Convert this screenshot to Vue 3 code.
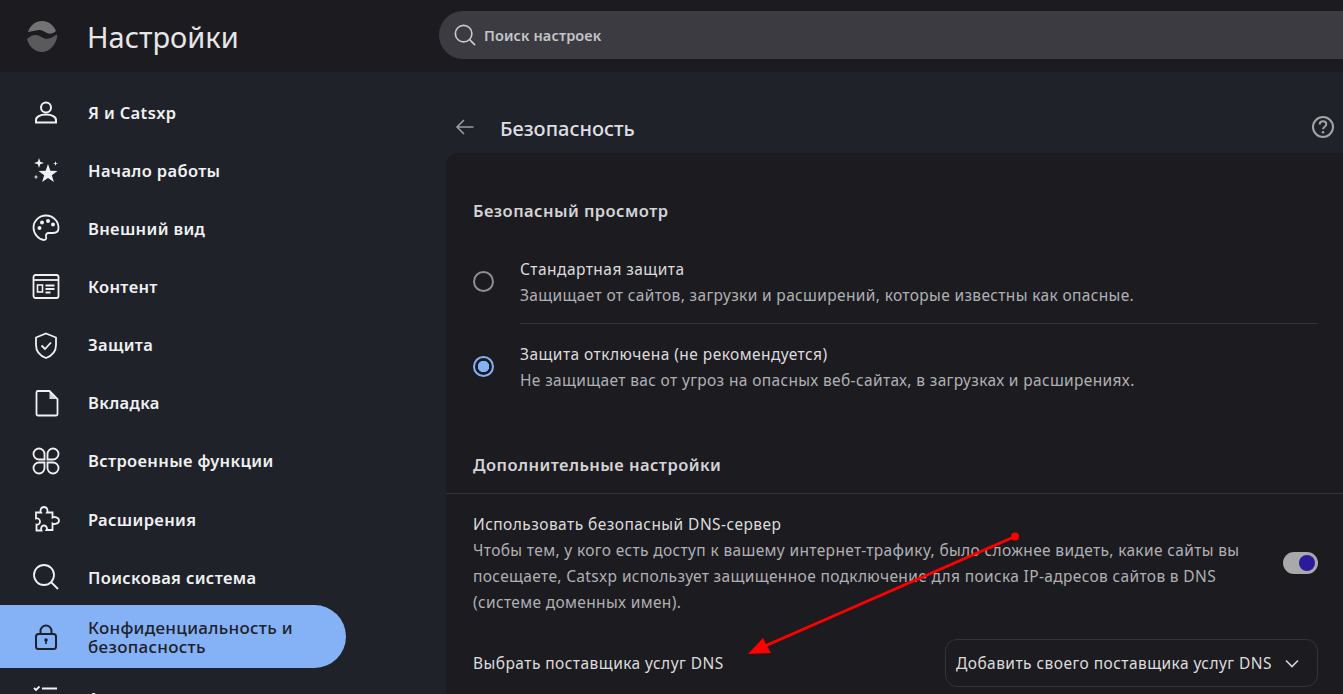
<script setup>
const navItems = [
  { label: "Я и Catsxp", icon: "person" },
  { label: "Начало работы", icon: "stars" },
  { label: "Внешний вид", icon: "palette" },
  { label: "Контент", icon: "content" },
  { label: "Защита", icon: "shield" },
  { label: "Вкладка", icon: "page" },
  { label: "Встроенные функции", icon: "clover" },
  { label: "Расширения", icon: "puzzle" },
  { label: "Поисковая система", icon: "search" },
  { label: "Конфиденциальность и безопасность", icon: "lock", active: true },
  { label: "Автозаполнение", icon: "list" },
];
</script>

<template>
  <div class="page">
    <header class="topbar">
      <div class="brand">
        <svg class="logo" width="32" height="32" viewBox="0 0 32 32">
          <path d="M2 12C4 5.500 9.500 1 16 1c6.500 0 11.500 4 14 10-3 2.500-6 3.500-9 2-3-1.500-5.500-3.500-8.500-3-3.500.500-7 1.500-10.500 2z" fill="#737375" />
          <path d="M1 19c3.500-3 6.500-4.500 9.500-4 3 .500 5 2.500 8 3.500 3.500 1 7-.500 12.500-4 .500 1.500 0 3-.500 5C28 26.500 22.500 32 16 32 8.500 32 3 26.500 1 19z" fill="#5a5a5d" />
        </svg>
        <span class="brand-title">Настройки</span>
      </div>
      <div class="search">
        <svg width="22" height="22" viewBox="0 0 24 24" fill="none" stroke="#c9c9cb" stroke-width="1.800">
          <circle cx="10.500" cy="10.500" r="9" />
          <path d="M17 17l6 6" />
        </svg>
        <span>Поиск настроек</span>
      </div>
    </header>

    <div class="body">
      <nav class="sidebar">
        <a v-for="item in navItems" :key="item.label" class="nav-item" :class="{ active: item.active }">
          <svg class="nav-icon" width="28" height="28" viewBox="0 0 28 28" fill="none" stroke="currentColor" stroke-width="1.800">
            <template v-if="item.icon === 'person'">
              <circle cx="14" cy="9.500" r="5" stroke-width="2" />
              <path d="M4 24.500v-2.500c0-3 4-5.500 10-5.500s10 2.500 10 5.500v2.500z" stroke-width="2" />
            </template>
            <template v-else-if="item.icon === 'stars'">
              <path d="M16 8l2.350 6.760 7.150.14-5.700 4.300 2.100 6.900-5.900-4.100-5.900 4.100 2.100-6.900-5.700-4.300 7.150-.14z" fill="currentColor" stroke="none" />
              <path d="M7 2l1.200 3.800L12 7 8.200 8.200 7 12 5.800 8.200 2 7l3.800-1.200zM23.500 5l.6 1.900 1.900.6-1.900.6-.6 1.900-.6-1.900-1.900-.6 1.900-.6zM4 18.500l.6 1.900 1.900.6-1.900.6-.6 1.900-.6-1.900-1.900-.6 1.900-.6z" fill="currentColor" stroke="none" />
            </template>
            <template v-else-if="item.icon === 'palette'">
              <path d="M14 1.500C7 1.500 1.500 7 1.500 13.500S7 26 12 26c2.500 0 2.500-2 2-3.500-.500-1.700.500-3.500 3-3.500h4c3.500 0 5.500-2 5.500-5C26.500 7 21 1.500 14 1.500z" />
              <g fill="currentColor" stroke="none">
                <circle cx="7.500" cy="14" r="2" /><circle cx="10" cy="8.500" r="2" /><circle cx="16" cy="7" r="2" /><circle cx="21" cy="10.500" r="2" />
              </g>
            </template>
            <template v-else-if="item.icon === 'content'">
              <rect x="1.500" y="3" width="25" height="23" rx="2" />
              <path d="M1.500 8h25" />
              <rect x="5.500" y="13" width="5" height="7" stroke-width="1.600" />
              <path d="M13.500 13.500h9M13.500 17h9M13.500 20.500h5" />
            </template>
            <template v-else-if="item.icon === 'shield'">
              <path d="M14 2.500l10 4v7.500c0 6.500-4.500 11-10 13-5.500-2-10-6.500-10-13V6.500z" />
              <path d="M9.500 14.500l3.500 3.500 6-6.500" />
            </template>
            <template v-else-if="item.icon === 'page'">
              <path d="M6 2h11.500L25.500 10v15a1.500 1.500 0 0 1-1.500 1.500H6A1.500 1.500 0 0 1 4.500 25V3.500A1.500 1.500 0 0 1 6 2z" />
              <path d="M17.500 2.500v7.500h8z" fill="currentColor" stroke="none" opacity=".85" />
            </template>
            <template v-else-if="item.icon === 'clover'">
              <path d="M12.500 12.500H7a5.500 5.500 0 1 1 5.500-5.500zM15.500 12.500V7a5.500 5.500 0 1 1 5.500 5.500zM12.500 15.500V21A5.500 5.500 0 1 1 7 15.500zM15.500 15.500H21a5.500 5.500 0 1 1-5.500 5.500z" />
            </template>
            <template v-else-if="item.icon === 'puzzle'">
              <path d="M4 7.500h5c-1-1.500-.500-5.500 3-5.500s4 4 3 5.500h5.500v5c1.500-1 6.500-.500 6.500 3s-5 4-6.500 3v6.500h-6c1-1.500 0-4.500-2.500-4.500S8.500 23 9.500 25.500H4.500v-6c1.500.500 3.500-.500 3.500-3s-2-3.500-4-3z" />
            </template>
            <template v-else-if="item.icon === 'search'">
              <circle cx="12" cy="12" r="10" />
              <path d="M19 19l7 7" />
            </template>
            <template v-else-if="item.icon === 'lock'">
              <rect x="4" y="11" width="20" height="15" rx="2.500" stroke-width="2" />
              <path d="M8.500 11V8a5.500 5.500 0 0 1 11 0v3" stroke-width="2" />
              <circle cx="14" cy="17" r="1.800" fill="currentColor" stroke="none" />
              <path d="M14 17v4" stroke-width="1.600" />
            </template>
            <template v-else>
              <path d="M2 4l2 2 3.500-3.500M10 4.500h15M2 13l2 2 3.500-3.500M10 13.500h15" />
            </template>
          </svg>
          <span class="nav-label">{{ item.label }}</span>
        </a>
      </nav>

      <main class="content">
        <div class="page-head">
          <svg class="back" width="20" height="20" viewBox="0 0 20 20" fill="none" stroke="#9b9ca1" stroke-width="1.600">
            <path d="M18.500 10H2M9 3l-7 7 7 7" />
          </svg>
          <h1>Безопасность</h1>
          <svg class="help" width="24" height="24" viewBox="0 0 24 24" fill="none" stroke="#a3a4a8" stroke-width="2">
            <circle cx="12" cy="12" r="10" />
            <path d="M8.700 9.500c0-2 1.500-3.200 3.300-3.200s3.300 1.200 3.300 3c0 2.400-3.300 2.500-3.300 5" />
            <circle cx="12" cy="17.300" r="1.300" fill="#a3a4a8" stroke="none" />
          </svg>
        </div>

        <section class="card">
          <h2 class="section-title first">Безопасный просмотр</h2>

          <div class="radio-list">
            <div class="radio-row">
              <span class="radio"></span>
              <div class="radio-text">
                <div class="row-title">Стандартная защита</div>
                <div class="row-desc">Защищает от сайтов, загрузки и расширений, которые известны как опасные.</div>
              </div>
            </div>
            <div class="radio-row checked">
              <span class="radio"></span>
              <div class="radio-text">
                <div class="row-title">Защита отключена (не рекомендуется)</div>
                <div class="row-desc">Не защищает вас от угроз на опасных веб-сайтах, в загрузках и расширениях.</div>
              </div>
            </div>
          </div>

          <h2 class="section-title second">Дополнительные настройки</h2>

          <div class="dns-row">
            <div class="dns-text">
              <div class="row-title">Использовать безопасный DNS-сервер</div>
              <div class="row-desc">Чтобы тем, у кого есть доступ к вашему интернет-трафику, было сложнее видеть, какие сайты вы посещаете, Catsxp использует защищенное подключение для поиска IP-адресов сайтов в DNS (системе доменных имен).</div>
            </div>
            <span class="toggle"><span class="knob"></span></span>
          </div>

          <div class="provider-row">
            <span class="row-title">Выбрать поставщика услуг DNS</span>
            <div class="select">
              <span>Добавить своего поставщика услуг DNS</span>
              <svg width="14" height="9" viewBox="0 0 14 9" fill="none" stroke="#d6d6d8" stroke-width="1.600">
                <path d="M1 1.500l6 6 6-6" />
              </svg>
            </div>
          </div>
        </section>
      </main>
    </div>

    <svg class="annotation" width="1343" height="694" viewBox="0 0 1343 694">
      <circle cx="1015" cy="536.500" r="4" fill="#f00" />
      <path d="M1015 536.500L765 646" stroke="#f00" stroke-width="3" />
      <path d="M748 654L763 638 767 646 771 653z" fill="#f00" />
    </svg>
  </div>
</template>

<style scoped>
.page {
  position: relative;
  width: 1343px;
  height: 694px;
  overflow: hidden;
  display: flex;
  flex-direction: column;
  background: #1f2229;
  color: #e3e3e5;
  font-family: "Noto Sans", "Open Sans", sans-serif;
}

.topbar {
  height: 72px;
  flex: none;
  display: flex;
  align-items: center;
  background: #1c1b20;
}

.brand {
  width: 439px;
  flex: none;
  display: flex;
  align-items: center;
  padding-left: 26px;
  box-sizing: border-box;
}

.logo {
  margin-right: 29px;
}

.brand-title {
  font-size: 29px;
  color: #e6e6e8;
}

.search {
  width: 904px;
  height: 48px;
  margin-top: -2px;
  padding-left: 15px;
  box-sizing: border-box;
  display: flex;
  align-items: center;
  gap: 8px;
  border-radius: 24px 0 0 24px;
  background: #3c3b41;
  font-size: 14.500px;
  letter-spacing: 0.1px;
  font-weight: 600;
  color: #c5c5c8;
}

.body {
  flex: 1;
  min-height: 0;
  display: flex;
}

.sidebar {
  width: 446px;
  flex: none;
  padding-top: 11px;
  box-sizing: border-box;
}

.nav-item {
  width: 346px;
  min-height: 58.150px;
  padding-left: 32px;
  box-sizing: border-box;
  display: flex;
  align-items: center;
  gap: 28px;
  color: #f1f1f3;
  font-size: 16.500px;
  letter-spacing: 0.35px;
  font-weight: 600;
}

.nav-icon {
  flex: none;
}

.nav-item.active {
  min-height: 63px;
  margin-top: -1px;
  margin-bottom: 1px;
  border-radius: 0 32px 32px 0;
  background: #85b1f6;
  color: #1e2129;
  font-size: 17px;
  letter-spacing: 0.3px;
  font-weight: 500;
  line-height: 19px;
}

.nav-label {
  width: 226px;
}

.content {
  flex: 1;
  min-width: 0;
}

.page-head {
  height: 81px;
  padding: 32px 8px 0 9px;
  box-sizing: border-box;
  display: flex;
  align-items: center;
}

.back {
  margin-right: 25px;
  margin-top: -3px;
}

.page-head h1 {
  flex: 1;
  margin: 0;
  font-size: 20px;
  font-weight: 500;
  color: #dedee0;
}

.help {
  margin-top: -3px;
}

.card {
  height: 541px;
  overflow: hidden;
  border-radius: 12px 0 0 0;
  background: #1c1b20;
}

.section-title {
  margin: 0;
  padding: 0 27px;
  font-size: 16.500px;
  letter-spacing: 0.45px;
  font-weight: 600;
  line-height: 22px;
  color: #d4d4d6;
}

.section-title.first {
  padding-top: 47px;
}

.section-title.second {
  margin-top: 46px;
  padding-bottom: 17px;
  border-bottom: 1px solid #34343a;
}

.radio-list {
  margin-top: 17px;
}

.radio-row {
  display: flex;
  align-items: center;
  gap: 26px;
  padding-left: 27px;
}

.radio {
  width: 21px;
  height: 21px;
  flex: none;
  box-sizing: border-box;
  border: 2px solid #8f8f93;
  border-radius: 50%;
}

.radio-row.checked .radio {
  border-color: #85b1f6;
  background: radial-gradient(circle, #85b1f6 0 5.500px, transparent 6px);
}

.radio-text {
  flex: 1;
  min-width: 0;
  margin-right: 25px;
  padding: 17px 0 15px;
}

.radio-row:not(.checked) .radio-text {
  border-bottom: 1px solid #34343a;
}

.row-title {
  font-size: 15.500px;
  letter-spacing: 0.45px;
  line-height: 26px;
  color: #dcdcde;
}

.row-desc {
  font-size: 15.500px;
  letter-spacing: 0.35px;
  line-height: 26px;
  color: #b0b0b3;
}

.dns-row {
  display: flex;
  align-items: center;
  padding: 17px 25px 0 27px;
}

.dns-text {
  width: 775px;
}

.toggle {
  margin-left: auto;
  width: 35px;
  height: 22px;
  display: flex;
  justify-content: flex-end;
  align-items: center;
  padding-right: 3px;
  box-sizing: border-box;
  border-radius: 11px;
  background: #a9a9ab;
}

.knob {
  width: 16px;
  height: 16px;
  border-radius: 50%;
  background: #2b1a9c;
}

.provider-row {
  display: flex;
  align-items: center;
  justify-content: space-between;
  padding: 24px 25px 0 27px;
}

.select {
  width: 373px;
  height: 48px;
  padding: 0 18px 0 10px;
  box-sizing: border-box;
  display: flex;
  align-items: center;
  justify-content: space-between;
  border: 1px solid #333338;
  border-radius: 12px;
  font-size: 15.500px;
  letter-spacing: 0.45px;
  color: #dcdcde;
}

.annotation {
  position: absolute;
  left: 0;
  top: 0;
  pointer-events: none;
}
</style>
